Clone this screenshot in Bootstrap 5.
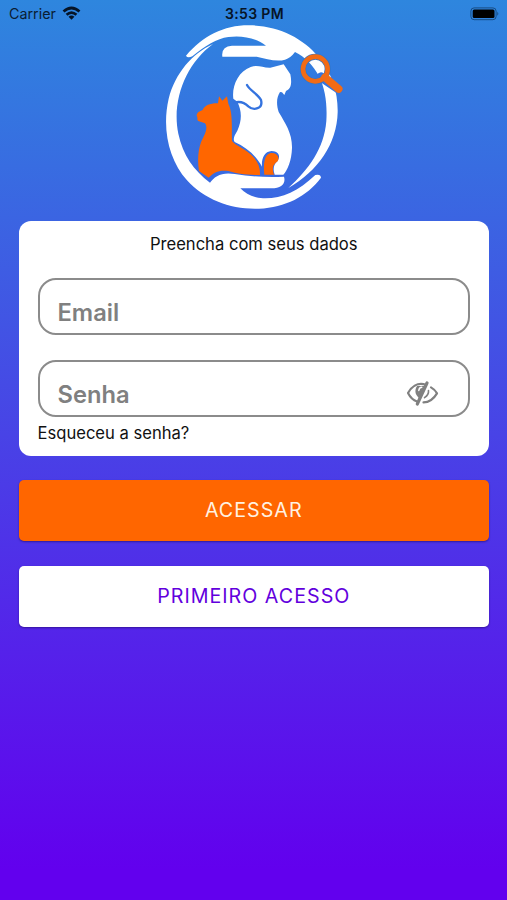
<!DOCTYPE html>
<html lang="pt-BR">
<head>
<meta charset="utf-8">
<meta name="viewport" content="width=device-width, initial-scale=1">
<title>Login</title>
<link href="https://cdn.jsdelivr.net/npm/bootstrap@5.3.0/dist/css/bootstrap.min.css" rel="stylesheet">
<style>
body{font-family:Inter,"Liberation Sans",sans-serif;height:900px;overflow:hidden;color:#111;background:linear-gradient(#2e86de 0,#6200ee 870px)}
.statusbar{height:25px;padding:2px 7px 0 9px;font-size:14.3px;line-height:24px;color:#0a1d33}
.statusbar .side{flex:1 1 0}
.wifi{margin-left:6px}
.clock{font-weight:600;font-size:14px;color:#061426;letter-spacing:.35px}
.logo{display:block;width:200px;height:200px;margin:-10px 0 0 155px}
.content{padding:0 18.5px 0 19px}
.panel{height:235px;margin-top:5.5px;border-radius:12px;padding:12px 18.5px 0}
.heading{font-size:16.6px;line-height:22px;margin-bottom:23.5px}
.field{height:57px;border:2px solid #8b8b8b;border-radius:18px;padding:13px 29px 0 18px;font-size:23.7px;line-height:1;font-weight:600;color:#808080;background:#fff}
.field + .field{margin-top:24.6px}
.field svg{margin-bottom:2px}
.forgot{font-size:16.6px;line-height:22px;margin-top:5px;color:#111}
.action{height:61px;border-radius:5px;border:0;padding-top:8px;font-size:19.7px;letter-spacing:1px;box-shadow:0 1px 2px rgba(20,0,80,.5)}
.action-main{background:#f60;color:#fff2e2;margin-top:24px}
.action-alt{background:#fff;color:#6200dd;margin-top:25px}
</style>
<script src="https://cdn.jsdelivr.net/npm/bootstrap@5.3.0/dist/js/bootstrap.bundle.min.js"></script>
</head>
<body>
<header class="statusbar d-flex align-items-center">
  <div class="side d-flex align-items-center"><span>Carrier</span>
    <svg class="wifi" width="19" height="15" viewBox="0 0 20 15" fill="none" stroke="#061426" stroke-width="2.9"><path d="M1.6 5.4Q10-2 18.4 5.4M4.8 8.8Q10 4.3 15.2 8.8"/><path d="M10 14 6.9 10.9Q10 8.4 13.1 10.9Z" fill="#061426" stroke="none"/></svg>
  </div>
  <div class="clock">3:53 PM</div>
  <div class="side d-flex justify-content-end">
    <svg width="30" height="14" viewBox="0 0 30 14"><rect x=".9" y=".9" width="25.2" height="11.8" rx="3.2" fill="none" stroke="#174c83"/><rect x="2.7" y="2.5" width="21.8" height="8.6" rx="1.5" fill="#000"/><path d="M27.3 4.8q2 2 0 4z" fill="#174c83"/></svg>
  </div>
</header>
<main>
  <svg class="logo" viewBox="0 0 600 600" role="img" aria-label="Logo">
    <g fill="#fff">
      <path d="M93 122C145 62 208 30 284 31C370 32 443 69 490 125C533 178 549 232 548 292C546 386 488 470 400 519C461 463 507 402 514 318C517 268 511 222 492 183C474 152 450 125 420 111Q407 129 390 134C363 142 333 130 305 125H202Q198 94 231 92H333C304 69 260 60 220 66C185 71 151 92 112 124Q97 130 93 122Z"/>
      <path d="M174 87C111 116 61 174 41 251C20 343 42 435 96 496C151 556 229 584 312 581C391 577 455 545 498 488Q497 476 481 480C428 530 378 552 324 550C292 547 273 538 256 520H349C380 520 393 505 387 485C334 488 286 484 239 477C201 470 178 484 165 503C116 465 84 421 70 356C49 255 94 145 174 87Z"/>
      <path d="M235 251C230 214 249 170 287 156C308 148 323 159 346 158L386 148L406 178C411 204 409 222 393 228L388 240L381 232L375 231C364 248 364 268 371 291C391 325 412 355 411 399C410 437 397 467 385 479H359C352 459 358 447 367 439C378 423 371 409 350 408C326 409 319 434 321 455C301 418 273 397 239 381C232 371 240 359 247 347C262 314 260 287 247 260Z"/>
    </g>
    <path d="M276 210C286 228 309 237 318 255C325 281 296 288 280 274C270 264 258 257 238 263" fill="none" stroke="#3473df" stroke-width="7" stroke-linecap="round"/>
    <g fill="#f60">
      <path d="M125 303C125 292 134 289 143 285C149 270 169 264 189 265L192 244L202 257L216 244L220 266C235 295 229 346 231 378C242 393 273 402 293 424C310 441 316 459 315 480C272 480 244 476 220 468C192 464 177 472 161 488L132 468C127 438 129 407 138 382C150 356 160 340 150 325L130 318C124 313 130 309 125 303Z"/>
      <path d="M328 479C325 449 327 418 347 414C368 411 378 432 364 442C354 451 350 458 357 479Z"/>
    </g>
    <path d="M498 186L551 222" stroke="#3475df" stroke-width="28" stroke-linecap="round"/>
    <circle cx="481" cy="162" r="37" fill="none" stroke="#2f75c8" stroke-width="18"/>
    <circle cx="481" cy="162" r="37" fill="none" stroke="#f26b15" stroke-width="14"/>
    <path d="M510 187L551 222" stroke="#f26b15" stroke-width="23" stroke-linecap="round"/>
  </svg>
  <div class="content">
    <section class="panel bg-white">
      <div class="heading text-center">Preencha com seus dados</div>
      <div class="field d-flex align-items-center">Email</div>
      <div class="field d-flex align-items-center justify-content-between">Senha
        <svg width="33" height="27" viewBox="0 0 33 27" fill="none" stroke="#808080" stroke-width="2.2" stroke-linecap="round" stroke-linejoin="round"><path d="M20 4.8C11 1.8 5 7.2 2 13c2.2 4.3 5.3 7.3 9 8.5M25 7.4c3 1.6 4.6 3.7 6 6-3.4 5.7-8 9-13.5 9"/><path d="M21 3 11.3 24" stroke-width="3.2"/><path d="M11 6c-3 5-1.5 9 2 12l6-12z" fill="#808080" stroke="none"/><path d="M12.8 10.5q.3-3 3-3.2" stroke="#fff" stroke-width="1.4"/><path d="M22.5 10.5q.5 4-4 7.2" stroke-width="1.6"/></svg>
      </div>
      <div class="forgot">Esqueceu a senha?</div>
    </section>
    <button type="button" class="btn action action-main w-100">ACESSAR</button>
    <button type="button" class="btn action action-alt w-100">PRIMEIRO ACESSO</button>
  </div>
</main>
</body>
</html>
